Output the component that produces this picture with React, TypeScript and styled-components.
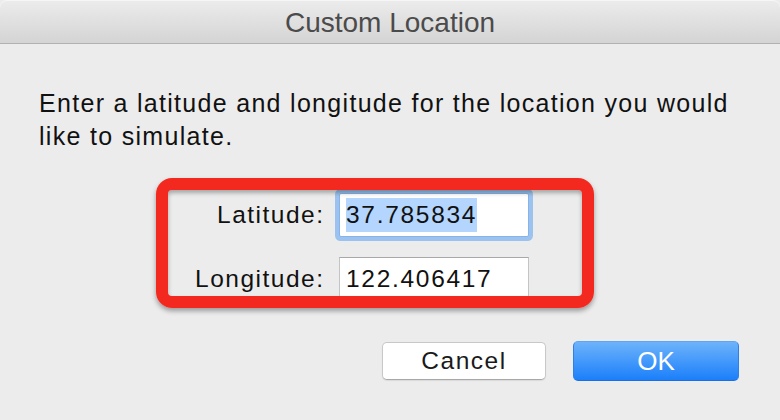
import React from "react";
import styled, { createGlobalStyle } from "styled-components";

const Global = createGlobalStyle`
  html, body { margin: 0; padding: 0; background: #ececec; }
  body { font-family: "Liberation Sans", Arial, sans-serif; }
  * { box-sizing: border-box; }
`;

const Window = styled.div`
  width: 780px;
  height: 420px;
  background: #ececec;
  display: flex;
  flex-direction: column;
  position: relative;
  overflow: hidden;
`;

const TitleBar = styled.div`
  height: 44px;
  flex: none;
  display: flex;
  align-items: center;
  justify-content: center;
  background: linear-gradient(#ececec, #d4d4d4);
  border-bottom: 1px solid #b1b1b1;
  border-radius: 7px 7px 0 0;
  box-shadow: inset 0 1px 0 #f6f6f6;
  font-size: 28px;
  color: #4b4b4b;
  padding-top: 2px;
`;

const Content = styled.div`
  position: relative;
  padding: 43px 41px 0 39px;
  display: flex;
  flex-direction: column;
`;

const Message = styled.p`
  margin: 0;
  font-size: 25px;
  letter-spacing: 1.3px;
  line-height: 33px;
  color: #111;
  width: 705px;
`;

const Form = styled.div`
  margin-top: 40px;
  display: grid;
  grid-template-columns: 284px 190px;
  column-gap: 16px;
  row-gap: 20px;
  align-items: center;
`;

const Label = styled.label`
  text-align: right;
  font-size: 24.5px;
  letter-spacing: 1.5px;
  margin-right: -1.5px;
  color: #111;
`;

const Field = styled.div<{ $focused?: boolean }>`
  height: 44px;
  background: #fff;
  border: 1px solid #c4c4c4;
  border-top-color: #a8a8a8;
  display: flex;
  align-items: center;
  padding-left: 6px;
  font-size: 24.5px;
  letter-spacing: 1.7px;
  color: #111;
  ${(p) =>
    p.$focused
      ? `border-color: #86b3ea; box-shadow: 0 0 0 4px #9cc3ef; border-radius: 2px;`
      : ``}
`;

const Selected = styled.span`
  background: #b4d6fe;
  padding: 3px 0;
`;

const Annotation = styled.div`
  position: absolute;
  left: 156px;
  top: 134px;
  width: 438px;
  height: 130px;
  border: 12px solid #f3291f;
  border-radius: 16px;
  box-shadow: 0 3px 5px rgba(0, 0, 0, 0.35), inset 0 3px 4px rgba(0, 0, 0, 0.3);
  pointer-events: none;
`;

const Buttons = styled.div`
  margin-top: 40px;
  display: flex;
  justify-content: flex-end;
  align-items: center;
  gap: 27px;
`;

const Button = styled.button<{ $primary?: boolean }>`
  font-family: "Liberation Sans", Arial, sans-serif;
  width: ${(p) => (p.$primary ? "166px" : "164px")};
  height: ${(p) => (p.$primary ? "40px" : "38px")};
  border-radius: 5px;
  font-size: ${(p) => (p.$primary ? "26px" : "24.5px")};
  letter-spacing: ${(p) => (p.$primary ? "0" : "1.5px")};
  padding: 0;
  display: flex;
  align-items: center;
  justify-content: center;
  ${(p) =>
    p.$primary
      ? `
    color: #fff;
    background: linear-gradient(#6db3fb, #1b7ffa);
    border: 1px solid #2f7fe6;
    border-top-color: #5fa5f5;
    border-bottom-color: #1d6fe0;
  `
      : `
    color: #1a1a1a;
    background: #fff;
    border: 1px solid #c8c8c8;
    border-bottom-color: #a8a8a8;
    box-shadow: 0 1px 1px rgba(0,0,0,0.08);
  `}
`;

export default function App() {
  return (
    <>
      <Global />
      <Window>
        <TitleBar>Custom Location</TitleBar>
        <Content>
          <Message>
            Enter a latitude and longitude for the location you would like to simulate.
          </Message>
          <Form>
            <Label>Latitude:</Label>
            <Field $focused>
              <Selected>37.785834</Selected>
            </Field>
            <Label>Longitude:</Label>
            <Field>122.406417</Field>
          </Form>
          <Annotation />
          <Buttons>
            <Button>Cancel</Button>
            <Button $primary>OK</Button>
          </Buttons>
        </Content>
      </Window>
    </>
  );
}
